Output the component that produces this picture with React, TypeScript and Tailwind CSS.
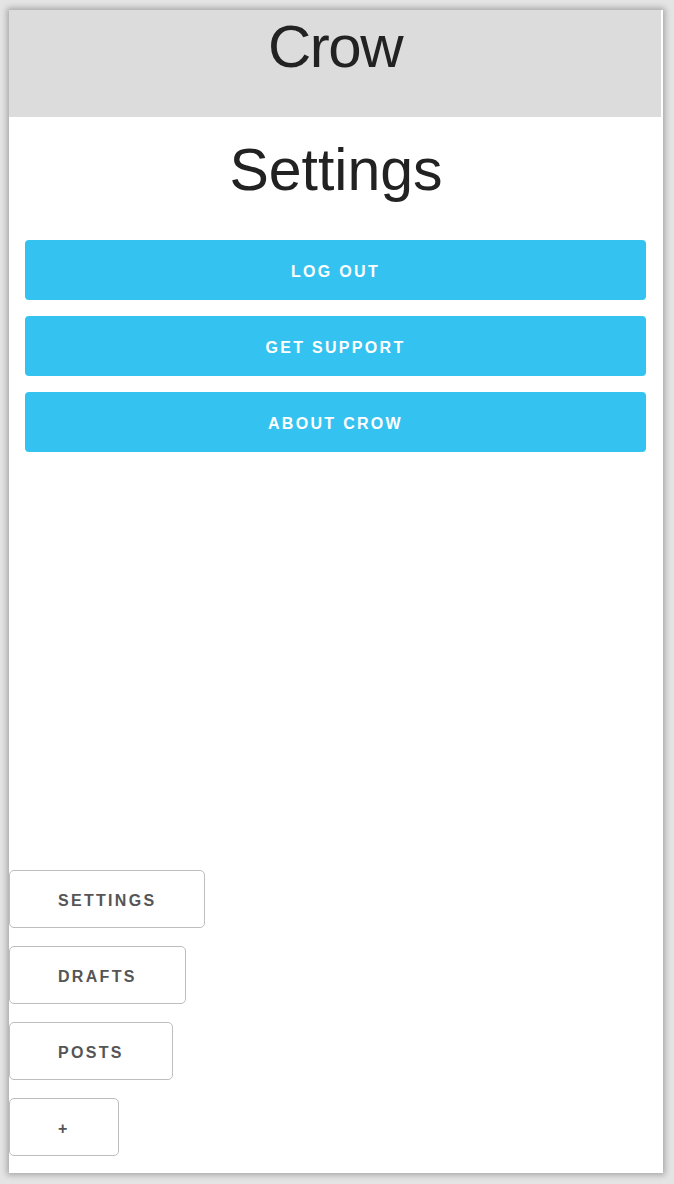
import React from "react";

const font = { fontFamily: '"Liberation Sans", Arial, Helvetica, sans-serif' };

export default function App() {
  const actions = ["LOG OUT", "GET SUPPORT", "ABOUT CROW"];
  const nav = ["SETTINGS", "DRAFTS", "POSTS", "+"];
  return (
    <div className="w-[674px] h-[1184px] bg-[#e4e4e4] pt-[10px] pl-[9px]" style={font}>
      <div className="w-[654px] h-[1163px] bg-white flex flex-col shadow-[0_0_6px_2px_rgba(0,0,0,0.28)]">
        <header className="h-[107px] mr-[2px] bg-[#dcdcdc] pt-[7px] text-center">
          <h1 className="text-[60px] leading-none tracking-[-1.5px] text-[#222]">Crow</h1>
        </header>
        <h2 className="mt-[24px] text-center text-[59px] leading-none text-[#222]">Settings</h2>
        <div className="mt-[40px] px-4 pr-[17px] flex flex-col gap-4">
          {actions.map((a) => (
            <button
              key={a}
              className="h-[60px] w-full pt-[4px] rounded bg-[#34c3f0] text-white font-bold text-[16px] tracking-[2.3px]"
            >
              {a}
            </button>
          ))}
        </div>
        <nav className="mt-auto mb-[17px] flex flex-col items-start gap-[18px]">
          {nav.map((n) => (
            <button
              key={n}
              className="h-[58px] px-12 pt-[4px] rounded-[5px] border border-[#bdbdbd] bg-white text-[#555] font-bold text-[16px] tracking-[2.3px]"
            >
              {n}
            </button>
          ))}
        </nav>
      </div>
    </div>
  );
}
